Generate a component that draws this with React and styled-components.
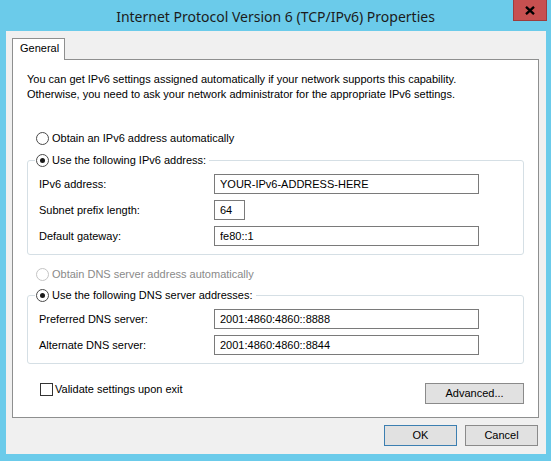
import React from 'react'
import styled, { createGlobalStyle } from 'styled-components'

const GlobalStyle = createGlobalStyle`
	html, body {
		margin: 0;
		padding: 0;
		background: #6bcbea;
	}
	body {
		font-family: 'Liberation Sans', Arial, sans-serif;
		font-size: 11px;
		color: #000;
	}
`

function Radio(props) {
	return (
		<RadioRow disabled={props.disabled}>
			<RadioCircle checked={props.checked} disabled={props.disabled} />
			{props.children}
		</RadioRow>
	)
}

function Field(props) {
	return (
		<FieldRow>
			<FieldLabel>{props.label}</FieldLabel>
			<TextBox defaultValue={props.value} readOnly narrow={props.narrow} />
		</FieldRow>
	)
}

function CloseGlyph() {
	return (
		<svg width="10" height="9" viewBox="0 0 10 9">
			<path d="M1 0.8 L9 8.2 M9 0.8 L1 8.2" stroke="#000" strokeWidth="2.3" fill="none" />
		</svg>
	)
}

export default function App() {
	return (
		<Window>
			<GlobalStyle />
			<TitleBar>
				<Title>Internet Protocol Version 6 (TCP/IPv6) Properties</Title>
				<CloseButton>
					<CloseGlyph />
				</CloseButton>
			</TitleBar>

			<Client>
				<TabStrip>
					<Tab>General</Tab>
				</TabStrip>
				<Panel>
					<Description>
						You can get IPv6 settings assigned automatically if your network supports this capability.
						<br />
						Otherwise, you need to ask your network administrator for the appropriate IPv6 settings.
					</Description>

					<Spaced top={29}>
						<Radio>Obtain an IPv6 address automatically</Radio>
					</Spaced>

					<GroupBox top={7}>
						<Legend>
							<Radio checked>Use the following IPv6 address:</Radio>
						</Legend>
						<GroupBody>
							<Field label="IPv6 address:" value="YOUR-IPv6-ADDRESS-HERE" />
							<Field label="Subnet prefix length:" value="64" narrow />
							<Field label="Default gateway:" value="fe80::1" />
						</GroupBody>
					</GroupBox>

					<Spaced top={12}>
						<Radio disabled>Obtain DNS server address automatically</Radio>
					</Spaced>

					<GroupBox top={6}>
						<Legend>
							<Radio checked>Use the following DNS server addresses:</Radio>
						</Legend>
						<GroupBody>
							<Field label="Preferred DNS server:" value="2001:4860:4860::8888" />
							<Field label="Alternate DNS server:" value="2001:4860:4860::8844" />
						</GroupBody>
					</GroupBox>

					<BottomRow>
						<CheckRow>
							<CheckBox />
							Validate settings upon exit
						</CheckRow>
						<Button wide>Advanced...</Button>
					</BottomRow>
				</Panel>

				<DialogButtons>
					<Button primary>OK</Button>
					<Button>Cancel</Button>
				</DialogButtons>
			</Client>
		</Window>
	)
}

const Window = styled.div`
	width: 551px;
	height: 461px;
	background: #6bcbea;
	display: flex;
	flex-direction: column;
	box-sizing: border-box;
	padding: 0 5px 7px 6px;
`
const TitleBar = styled.div`
	height: 31px;
	display: flex;
	align-items: center;
	justify-content: center;
	position: relative;
	margin: 0 -5px 0 -6px;
`
const Title = styled.div`
	font-family: 'Noto Sans', 'Open Sans', sans-serif;
	font-size: 14px;
	color: #1b1b1b;
	margin-top: 1px;
`
const CloseButton = styled.div`
	position: absolute;
	top: 0;
	right: 4px;
	width: 34px;
	height: 21px;
	box-sizing: border-box;
	background: #c75050;
	border: 1px solid #9e3c3c;
	border-top: none;
	display: flex;
	align-items: center;
	justify-content: center;
`
const Client = styled.div`
	flex: 1;
	background: #f0f0f0;
	display: flex;
	flex-direction: column;
	padding: 7px 7px 8px 6px;
`
const TabStrip = styled.div`
	display: flex;
	position: relative;
	z-index: 1;
`
const Tab = styled.div`
	width: 53px;
	height: 22px;
	box-sizing: border-box;
	background: #fff;
	border: 1px solid #8e8f8f;
	border-bottom: none;
	margin-bottom: -1px;
	padding: 2px 0 0 7px;
	line-height: 15px;
`
const Panel = styled.div`
	height: 359px;
	box-sizing: border-box;
	background: #fff;
	border: 1px solid #8e8f8f;
	padding: 12px 14px 14px 14px;
	display: flex;
	flex-direction: column;
`
const Description = styled.div`
	line-height: 15px;
	white-space: nowrap;
`
const Spaced = styled.div`
	margin-top: ${props => props.top}px;
	padding-left: 9px;
`
const RadioRow = styled.div`
	display: flex;
	align-items: center;
	height: 15px;
	line-height: 15px;
	color: ${props => (props.disabled ? '#8a8a8a' : '#000')};
	white-space: nowrap;
`
const RadioCircle = styled.span`
	flex: none;
	width: 13px;
	height: 13px;
	box-sizing: border-box;
	border-radius: 50%;
	border: 1px solid ${props => (props.disabled ? '#c4c4c4' : '#4a4a4a')};
	background: #fff;
	margin-right: 3px;
	display: flex;
	align-items: center;
	justify-content: center;

	&::after {
		content: '';
		width: 5px;
		height: 5px;
		border-radius: 50%;
		background: #1a1a1a;
		display: ${props => (props.checked ? 'block' : 'none')};
	}
`
const GroupBox = styled.fieldset`
	margin: ${props => props.top}px 0 0 0;
	padding: 0;
	min-inline-size: 0;
	border: 1px solid #d5dfe5;
	border-radius: 3px;
`
const Legend = styled.legend`
	margin-left: 7px;
	padding: 0 3px 0 1px;
`
const GroupBody = styled.div`
	display: flex;
	flex-direction: column;
	gap: 6px;
	padding: 6px 0 8px 11px;
`
const FieldRow = styled.div`
	display: grid;
	grid-template-columns: 175px auto;
	align-items: center;
	height: 20px;
`
const FieldLabel = styled.span`
	line-height: 15px;
`
const TextBox = styled.input`
	font: inherit;
	color: #000;
	width: ${props => (props.narrow ? '31px' : '265px')};
	height: 20px;
	box-sizing: border-box;
	border: 1px solid #7a7a7a;
	background: #fff;
	padding: 0 0 0 5px;
	margin: 0;
	outline: none;
`
const BottomRow = styled.div`
	display: flex;
	justify-content: space-between;
	align-items: flex-start;
	margin-top: 19px;
	padding-left: 13px;
`
const CheckRow = styled.div`
	display: flex;
	align-items: center;
	height: 15px;
	line-height: 15px;
	margin-top: -1px;
`
const CheckBox = styled.span`
	width: 13px;
	height: 13px;
	box-sizing: border-box;
	border: 1px solid #333;
	background: #fff;
	margin-right: 2px;
`
const Button = styled.div`
	width: ${props => (props.wide ? '99px' : '73px')};
	height: 21px;
	box-sizing: border-box;
	background: #e1e1e1;
	border: 1px solid ${props => (props.primary ? '#3c7fb1' : '#8a8a8a')};
	display: flex;
	align-items: center;
	justify-content: center;
	line-height: 15px;
`
const DialogButtons = styled.div`
	display: flex;
	justify-content: flex-end;
	gap: 8px;
	margin-top: 7px;
	padding-right: 1px;
`
